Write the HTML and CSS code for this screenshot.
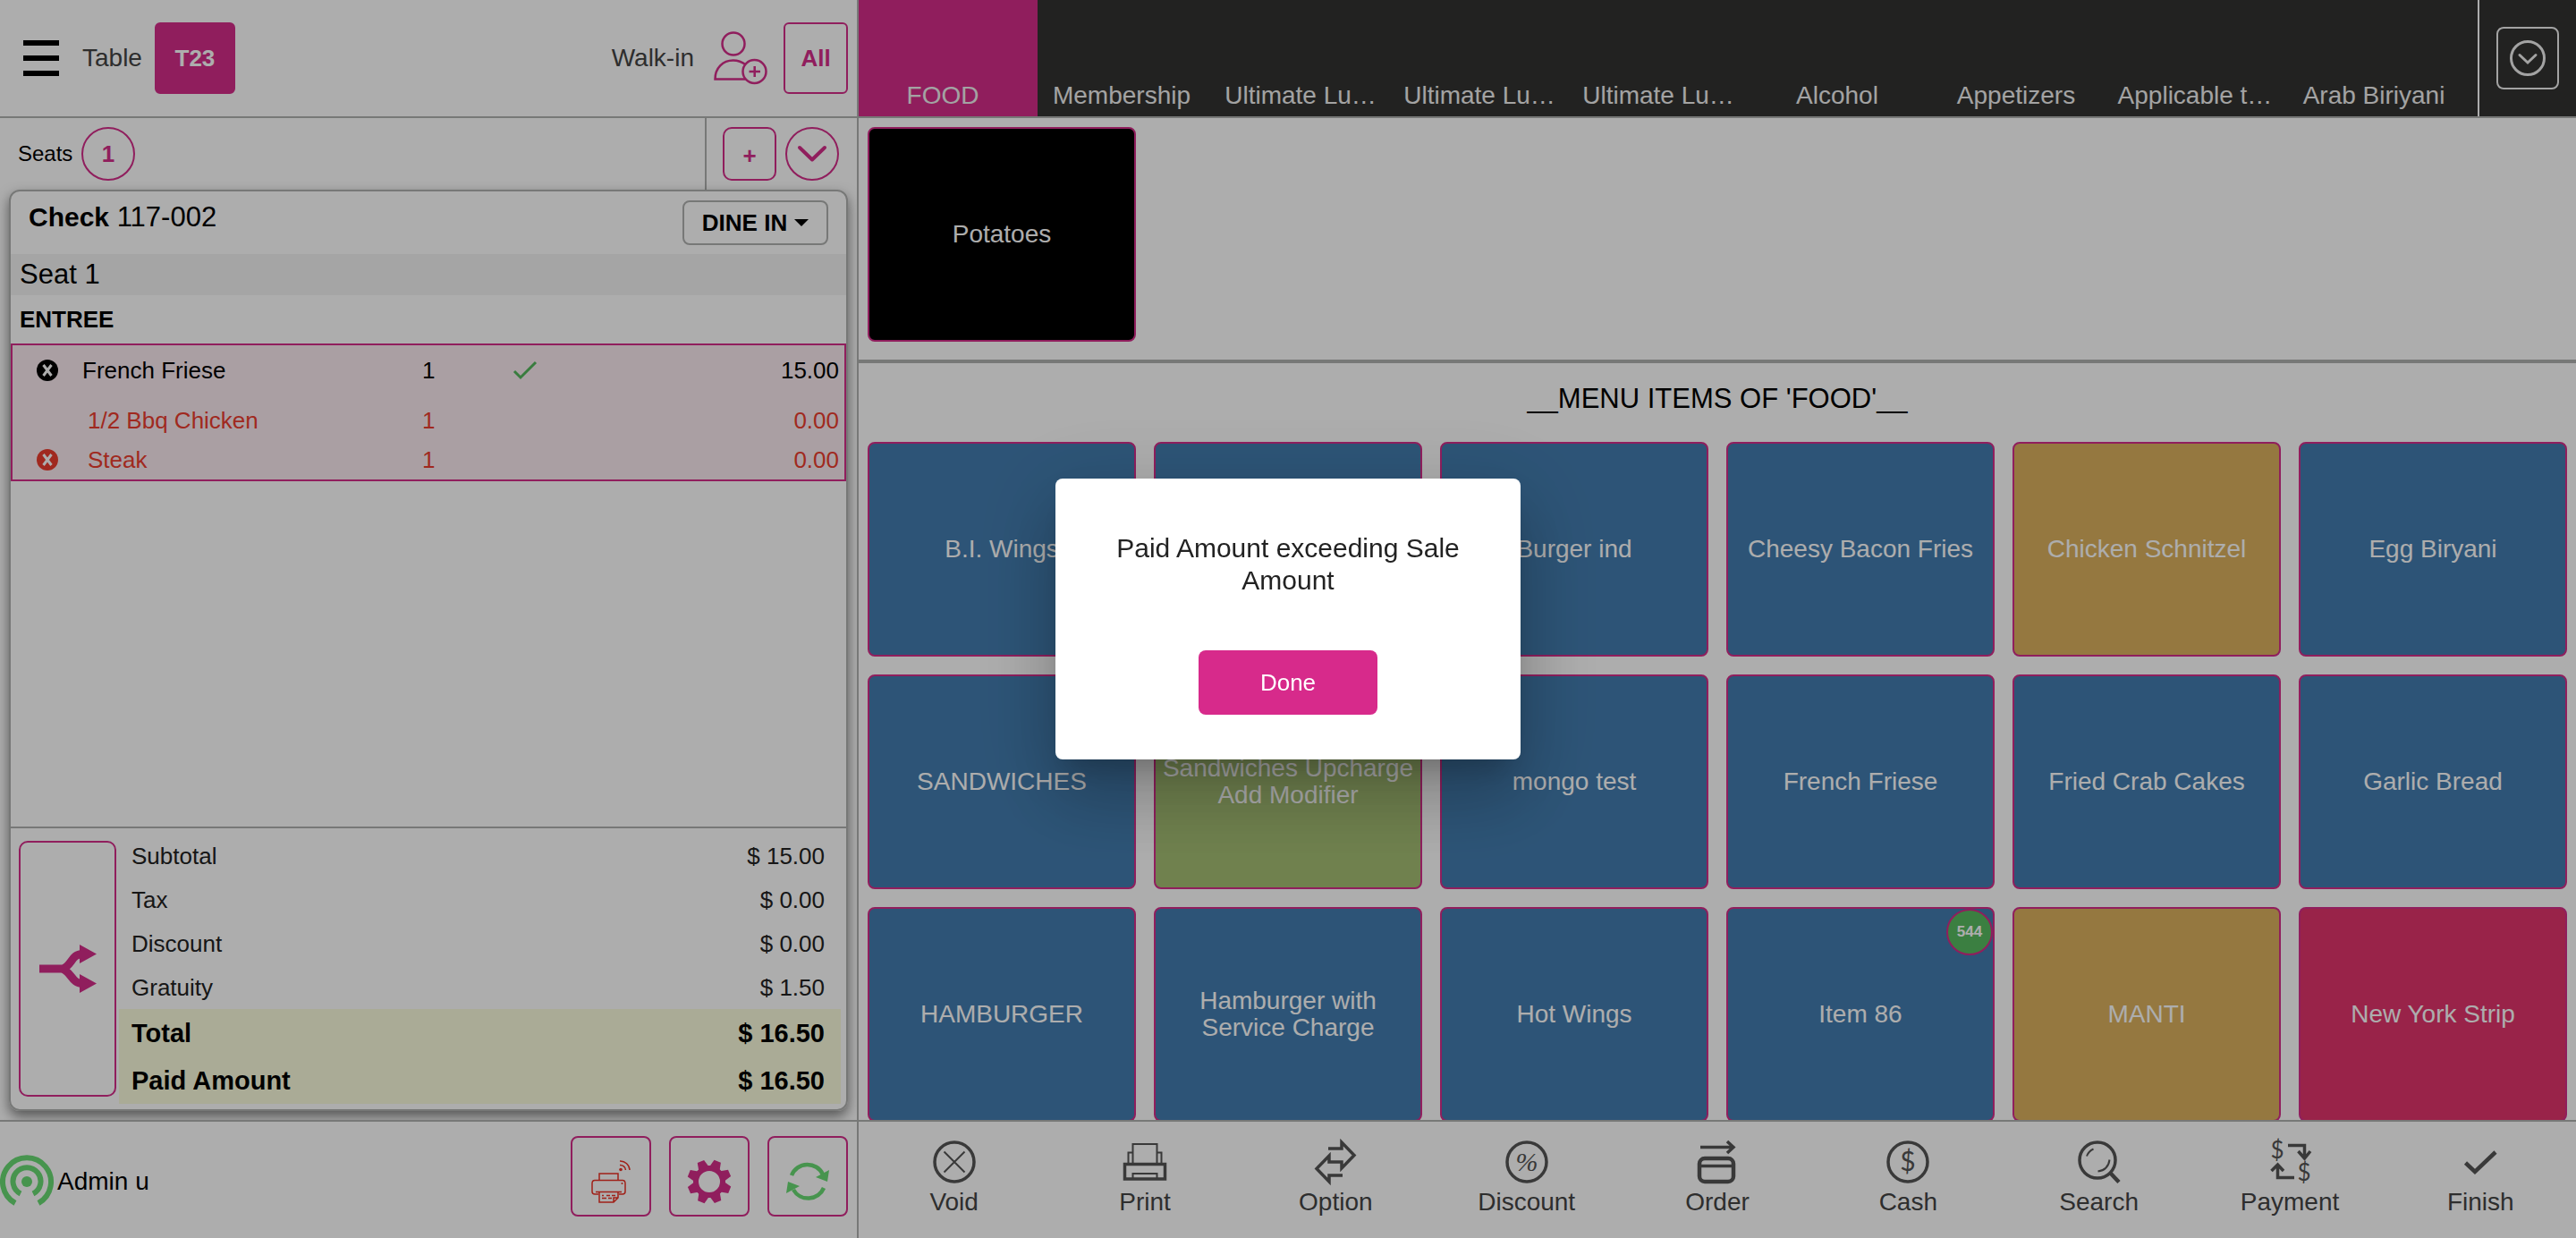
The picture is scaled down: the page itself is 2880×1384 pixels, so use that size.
FILE: index.html
```html
<!DOCTYPE html>
<html lang="en">
<head>
<meta charset="utf-8">
<title>Point of Sale</title>
<link rel="stylesheet" href="styles.css">
</head>
<body>
<div class="app">
  <section class="check-pane">
    <header class="topbar">
      <button class="menu-toggle" aria-label="Menu"><span></span><span></span><span></span></button>
      <span class="topbar-label">Table</span>
      <button class="table-button">T23</button>
      <span class="topbar-label customer">Walk-in</span>
      <button class="add-customer" aria-label="Add customer">
        <svg width="60" height="60" viewBox="0 0 60 60" fill="none" stroke="currentColor" stroke-width="2.5">
          <circle cx="22" cy="14" r="12.5"/>
          <path d="M35 53.5H1.5C1.5 41 10 32.5 21.7 32.5C27 32.5 32 34.5 36 37.500"/>
          <circle cx="45.500" cy="45" r="13"/>
          <path d="M39.500 45H52M45.700 39V51"/>
        </svg>
      </button>
      <button class="all-button">All</button>
    </header>

    <div class="seats">
      <span class="seats-label">Seats</span>
      <button class="seat-chip">1</button>
      <div class="seats-actions">
        <button class="seat-add">+</button>
        <button class="seat-chip" aria-label="Show seats">
          <svg width="32" height="18" viewBox="0 0 32 18" fill="none" stroke="currentColor" stroke-width="4" stroke-linecap="round" stroke-linejoin="round"><path d="M2 2L16 15.500L30 2"/></svg>
        </button>
      </div>
    </div>

    <article class="ticket">
      <div class="ticket-head">
        <h1 class="ticket-title"><b>Check</b> 117-002</h1>
        <button class="order-type">DINE IN
          <svg width="16" height="8" viewBox="0 0 16 8"><path d="M0 0H16L8 8Z"/></svg>
        </button>
      </div>
      <h2 class="seat-name">Seat 1</h2>
      <h3 class="course">ENTREE</h3>
      <table class="lines">
        <tr>
          <td class="mark"><svg width="24" height="24" viewBox="0 0 24 24"><circle cx="12" cy="12" r="12"/><path class="cross" d="M7.500 6L16.500 18M16.500 6L7.500 18"/></svg></td>
          <td>French Friese</td><td>1</td>
          <td><svg class="sent" width="28" height="22" viewBox="0 0 28 22"><path d="M2 12L9 19L26 2"/></svg></td>
          <td class="price">15.00</td>
        </tr>
        <tr class="modifier">
          <td></td><td>1/2 Bbq Chicken</td><td>1</td><td></td><td class="price">0.00</td>
        </tr>
        <tr class="modifier last">
          <td class="mark"><svg width="24" height="24" viewBox="0 0 24 24"><circle cx="12" cy="12" r="12"/><path class="cross" d="M7.500 6L16.500 18M16.500 6L7.500 18"/></svg></td>
          <td>Steak</td><td>1</td><td></td><td class="price">0.00</td>
        </tr>
      </table>
      <div class="summary">
        <button class="split-button" aria-label="Split check">
          <svg width="64" height="54" viewBox="0 0 64 54" fill="none" stroke="currentColor" stroke-width="9">
            <path d="M0 27H26C36 24 36 10.500 48 10.500M25 27C36 30 36 43.500 48 43.500"/>
            <path d="M45 0L64 10.500L45 21ZM45 33L64 43.500L45 54Z" fill="currentColor" stroke="none"/>
          </svg>
        </button>
        <table class="totals">
          <tr><th>Subtotal</th><td>$ 15.00</td></tr>
          <tr><th>Tax</th><td>$ 0.00</td></tr>
          <tr><th>Discount</th><td>$ 0.00</td></tr>
          <tr><th>Gratuity</th><td>$ 1.50</td></tr>
          <tr class="grand"><th>Total</th><td>$ 16.50</td></tr>
          <tr class="grand"><th>Paid Amount</th><td>$ 16.50</td></tr>
        </table>
      </div>
    </article>

    <footer class="user-bar">
      <div class="user">
        <svg width="60" height="60" viewBox="0 0 60 60" fill="none" stroke="currentColor" stroke-width="6">
          <circle cx="30" cy="30" r="6" fill="currentColor" stroke="none"/>
          <path d="M23 43.500A15.500 15.500 0 1 1 37 43.500M17 54A27 27 0 1 1 43 54"/>
        </svg>
        <span>Admin u</span>
      </div>
      <button class="tool printer" aria-label="Printer status">
        <svg width="44" height="48" viewBox="0 0 44 48" fill="none" stroke="currentColor" stroke-width="1.500">
          <path d="M9 22.500V15H30V22.500M8 38H4Q1 38 1 35V26Q1 22.500 4 22.500H35Q38 22.500 38 26V35Q38 38 35 38H31M5 35.500H34M9 35.500V47H25L30 42V35.500M25 47V42H30M12 39.500H14M17 39.500H21M23 39.500H27M12 42.500H17M19 42.500H23M32 5.500A6 6 0 0 1 38.500 11M32 1A10.500 10.500 0 0 1 43 11"/>
          <circle cx="33" cy="10.500" r="1.800" fill="currentColor" stroke="none"/><circle cx="34.500" cy="26" r="1" fill="currentColor" stroke="none"/>
        </svg>
      </button>
      <button class="tool" aria-label="Settings">
        <svg width="48" height="48" viewBox="-24 -24 48 48" fill="currentColor">
          <defs><path id="tooth" d="M-6 -16L-4 -24.500H4L6 -16Z"/></defs>
          <circle r="15" fill="none" stroke="currentColor" stroke-width="6"/>
          <use href="#tooth" transform="rotate(22)"/><use href="#tooth" transform="rotate(67)"/><use href="#tooth" transform="rotate(112)"/><use href="#tooth" transform="rotate(157)"/><use href="#tooth" transform="rotate(202)"/><use href="#tooth" transform="rotate(247)"/><use href="#tooth" transform="rotate(292)"/><use href="#tooth" transform="rotate(337)"/>
        </svg>
      </button>
      <button class="tool sync" aria-label="Sync">
        <svg width="48" height="44" viewBox="0 0 48 44" fill="none" stroke="currentColor" stroke-width="4.500">
          <path d="M6 15A19 19 0 0 1 41 14M42 29A19 19 0 0 1 8 31"/>
          <path d="M48 9L46 22L33 17ZM0 35L2 22L15 27Z" fill="currentColor" stroke="none"/>
        </svg>
      </button>
    </footer>
  </section>

  <section class="menu-pane">
    <nav class="categories">
      <button class="category active">FOOD</button>
      <button class="category">Membership</button>
      <button class="category">Ultimate Lu…</button>
      <button class="category">Ultimate Lu…</button>
      <button class="category">Ultimate Lu…</button>
      <button class="category">Alcohol</button>
      <button class="category">Appetizers</button>
      <button class="category">Applicable t…</button>
      <button class="category">Arab Biriyani</button>
      <div class="more">
        <button class="more-button" aria-label="More categories">
          <svg width="40" height="40" viewBox="0 0 40 40" fill="none" stroke="currentColor" stroke-width="3" stroke-linecap="round"><circle cx="20" cy="20" r="18.500"/><path d="M11 16.500L20 25L29 16.500"/></svg>
        </button>
      </div>
    </nav>

    <div class="subcategories">
      <button class="tile black">Potatoes</button>
    </div>

    <div class="items">
      <h2 class="items-title">__MENU ITEMS OF 'FOOD'__</h2>
      <div class="item-grid">
        <button class="tile">B.I. Wings</button>
        <button class="tile"></button>
        <button class="tile">Burger ind</button>
        <button class="tile">Cheesy Bacon Fries</button>
        <button class="tile gold">Chicken Schnitzel</button>
        <button class="tile">Egg Biryani</button>
        <button class="tile">SANDWICHES</button>
        <button class="tile green">Sandwiches Upcharge Add Modifier</button>
        <button class="tile">mongo test</button>
        <button class="tile">French Friese</button>
        <button class="tile">Fried Crab Cakes</button>
        <button class="tile">Garlic Bread</button>
        <button class="tile">HAMBURGER</button>
        <button class="tile">Hamburger with Service Charge</button>
        <button class="tile">Hot Wings</button>
        <button class="tile">Item 86<span class="count">544</span></button>
        <button class="tile gold">MANTI</button>
        <button class="tile crimson">New York Strip</button>
      </div>
    </div>

    <footer class="actions">
      <button class="action"><svg viewBox="0 0 48 48"><circle cx="24" cy="24" r="22"/><path class="thin" d="M12.500 12.500L35.500 35.500M35.500 12.500L12.500 35.500"/></svg>Void</button>
      <button class="action"><svg viewBox="0 0 48 48"><path class="thin" d="M10.500 25V4H37.500V25M10.500 13.500H5.500V25M37.500 13.500H42.500V25M10.500 42V37H37.500V42"/><path d="M1.500 26.500H46.500V43H1.500Z"/></svg>Print</button>
      <button class="action"><svg viewBox="0 0 48 48"><path d="M16 9H31V2L45 16.500L31 31V24H17V17L3 31.500L17 46V39H32"/></svg>Option</button>
      <button class="action"><svg viewBox="0 0 48 48"><circle cx="24" cy="24" r="22"/><text class="percent" x="24" y="34">%</text></svg>Discount</button>
      <button class="action"><svg viewBox="0 0 48 48"><path d="M5 7.500H42M35 1L42 7.500L35 14"/><rect class="thick" x="4" y="20" width="38" height="26" rx="6"/><path d="M4 28.500H42"/></svg>Order</button>
      <button class="action"><svg viewBox="0 0 48 48"><circle cx="24" cy="24" r="22"/><text class="dollar" x="24" y="34">$</text></svg>Cash</button>
      <button class="action"><svg viewBox="0 0 48 48"><circle cx="22" cy="22" r="20"/><path class="thin" d="M10 17.500Q12 12 17.500 9.500M35.500 21.500Q34 33 22.500 34.500"/><path class="thick" d="M37 37L46 46.500"/></svg>Search</button>
      <button class="action"><svg viewBox="0 0 48 48"><text class="dollar small" x="10" y="20">$</text><text class="dollar small" x="40" y="45">$</text><path d="M22 5.500H40.500V18M33.500 12L40.500 20L47 12M29 41.500H10.500V29M3.500 34L10.500 27L17 34"/></svg>Payment</button>
      <button class="action"><svg viewBox="0 0 48 48"><path class="thick" d="M7.500 25L18 35L41 13"/></svg>Finish</button>
    </footer>
  </section>
</div>

<div class="overlay">
  <div class="modal" role="alertdialog" aria-labelledby="modal-message">
    <p class="modal-message" id="modal-message">Paid Amount exceeding Sale Amount</p>
    <button class="modal-button">Done</button>
  </div>
</div>
</body>
</html>
```
FILE: styles.css
```css
:root {
  --pink: #d42d8a;
  --line: #b0b1b0;
}

* { box-sizing: border-box; }

body {
  margin: 0;
  background: #fff;
  color: #000;
  font-family: "Liberation Sans", Arial, sans-serif;
  font-size: 26px;
  line-height: 30px;
}

button {
  display: flex;
  align-items: center;
  justify-content: center;
  flex: none;
  margin: 0;
  padding: 0;
  border: 0;
  background: none;
  color: inherit;
  font: inherit;
}

svg { display: block; flex: none; overflow: visible; }

h1, h2, h3, p { margin: 0; font-weight: 400; }

.app {
  display: grid;
  grid-template-columns: minmax(0, 1fr) minmax(0, 2fr);
  height: 100vh;
}

/* Left pane: current check */
.check-pane {
  display: flex;
  flex-direction: column;
  min-height: 0;
  overflow: hidden;
  border-right: 2px solid var(--line);
}

.topbar {
  display: flex;
  align-items: center;
  flex: none;
  height: 132px;
  padding: 0 10px 0 26px;
  border-bottom: 2px solid var(--line);
}

.menu-toggle {
  flex-direction: column;
  justify-content: space-between;
  width: 40px;
  height: 40px;
  margin-right: 26px;
}
.menu-toggle span { width: 40px; height: 6px; background: #000; }

.topbar-label { color: #444; font-size: 28px; }

.table-button, .all-button {
  height: 80px;
  border: 2px solid var(--pink);
  border-radius: 6px;
  font-weight: 700;
}
.table-button { width: 90px; margin-left: 14px; background: var(--pink); color: #fff; }
.all-button { width: 72px; color: var(--pink); }
.customer { margin-left: auto; }
.add-customer { margin: 0 18px 0 22px; color: var(--pink); }

.seats {
  display: flex;
  align-items: center;
  flex: none;
  height: 80px;
  padding-left: 20px;
}
.seats-label { width: 71px; font-size: 24px; }
.seat-chip, .seat-add {
  width: 60px;
  height: 60px;
  border: 2px solid var(--pink);
  color: var(--pink);
  font-weight: 700;
}
.seat-chip { border-radius: 50%; }
.seat-add { border-radius: 10px; padding-top: 4px; }
.seats-actions {
  display: flex;
  align-items: center;
  gap: 10px;
  height: 80px;
  margin-left: auto;
  padding: 0 20px 0 18px;
  border-left: 2px solid var(--line);
}

.ticket {
  display: flex;
  flex-direction: column;
  flex: 1;
  min-height: 0;
  margin: 0 10px;
  margin-bottom: 10px;
  overflow: hidden;
  border: 2px solid var(--line);
  border-radius: 12px;
  box-shadow: 0 6px 14px rgba(0, 0, 0, .5);
}
.ticket-head {
  display: flex;
  align-items: flex-start;
  justify-content: space-between;
  height: 70px;
  padding: 10px 20px 0;
}
.ticket-title { padding-top: 4px; font-size: 31px; }
.ticket-title b { font-size: 30px; }
.order-type {
  gap: 8px;
  width: 163px;
  height: 50px;
  border: 2px solid var(--line);
  border-radius: 8px;
  font-weight: 700;
}
.seat-name { padding: 8px 10px; background: #f3f3f3; font-size: 31px; }
.course { padding: 12px 10px; font-size: 26px; font-weight: 700; }

.lines {
  display: block;
  flex: none;
  padding-bottom: 6px;
  border: 2px solid var(--pink);
  border-spacing: 0;
  background: #fbebf1;
}
.lines tbody { display: table; width: 100%; table-layout: fixed; }
.lines tr { height: 56px; }
.lines td { padding: 0; }
.lines td:nth-child(1) { width: 78px; }
.lines td:nth-child(2) { width: 380px; }
.lines td:nth-child(3) { width: 101px; }
.lines td:nth-child(4) { width: 100px; }
.lines .mark { padding-left: 27px; }
.lines .price { padding-right: 6px; text-align: right; }
.lines .modifier { color: #ec3d2f; }
.lines .modifier td:nth-child(2) { padding-left: 6px; }
.lines .last { height: 32px; }
.mark svg { fill: currentColor; }
.cross { stroke: #fff; stroke-width: 3; }
.sent path { fill: none; stroke: #54b75c; stroke-width: 3; }

.summary {
  display: flex;
  flex: none;
  gap: 3px;
  margin-top: auto;
  padding: 6px 6px 6px 9px;
  border-top: 2px solid var(--line);
}
.split-button {
  width: 109px;
  margin: 8px 0;
  border: 2px solid var(--pink);
  border-radius: 10px;
  color: var(--pink);
}
.totals { flex: 1; border-spacing: 0; }
.totals tr { height: 49px; }
.totals th { padding: 0 0 0 14px; color: #222; font-weight: 400; text-align: left; }
.totals td { padding: 0 18px 0 0; color: #222; text-align: right; }
.totals .grand { height: 53px; background: #fbfddd; font-size: 29px; }
.totals .grand th, .totals .grand td { color: #000; font-weight: 700; }

.user-bar {
  display: flex;
  align-items: flex-start;
  flex: none;
  gap: 20px;
  height: 132px;
  padding: 16px 10px 0 0;
  border-top: 2px solid var(--line);
  background: #fff;
}
.user {
  display: flex;
  align-items: center;
  gap: 4px;
  margin-right: auto;
  padding-top: 21px;
  font-size: 28px;
}
.user svg { color: #69da74; }
.tool {
  width: 90px;
  height: 90px;
  padding-top: 12px;
  border: 2px solid var(--pink);
  border-radius: 8px;
  color: var(--pink);
}
.tool.printer svg { color: #ec3225; }
.tool.sync svg { color: #69da74; }

/* Right pane: menu */
.menu-pane {
  display: flex;
  flex-direction: column;
  min-height: 0;
}

.categories {
  display: flex;
  flex: none;
  height: 132px;
  border-bottom: 2px solid var(--line);
  background: #333331;
}
.category {
  flex: 0 0 200px;
  align-items: flex-end;
  padding: 0 12px 8px 0;
  color: #f0f0f0;
  font-size: 28px;
}
.category.active { background: var(--pink); }
.more {
  display: flex;
  align-items: center;
  justify-content: center;
  width: 110px;
  margin-left: auto;
  border-left: 2px solid #fff;
}
.more-button {
  width: 70px;
  height: 70px;
  border: 2px solid #f0f0f0;
  border-radius: 8px;
  color: #f0f0f0;
}

.subcategories, .item-grid {
  display: grid;
  grid-template-columns: repeat(6, minmax(0, 1fr));
  gap: 20px;
  padding: 0 10px;
}
.subcategories {
  flex: none;
  height: 274px;
  padding-top: 10px;
  border-bottom: 4px solid var(--line);
}
.tile {
  position: relative;
  height: 240px;
  border: 2px solid var(--pink);
  border-radius: 8px;
  background: #437db0;
  color: #fff;
  font-size: 28px;
}
.tile.black { background: #000; }
.tile.gold { background: #dcb25f; }
.tile.green { background: #a5bf74; }
.tile.crimson { background: #e2346c; }
.count {
  position: absolute;
  top: 0;
  right: 0;
  width: 52px;
  height: 52px;
  border: 2px solid var(--pink);
  border-radius: 50%;
  background: #58bc61;
  font-size: 17px;
  font-weight: 700;
  line-height: 48px;
}

.items { flex: 1; min-height: 0; overflow: hidden; }
.items-title {
  padding: 20px 0 28px;
  font-size: 31px;
  line-height: 40px;
  text-align: center;
}

.actions {
  display: grid;
  grid-template-columns: repeat(9, minmax(0, 1fr));
  flex: none;
  height: 132px;
  border-top: 2px solid var(--line);
  color: #444;
}
.action {
  flex-direction: column;
  justify-content: flex-start;
  gap: 6px;
  padding-top: 21px;
  font-size: 28px;
}
.action svg { width: 48px; height: 48px; fill: none; stroke: #555; stroke-width: 3.5; }
.action .thin { stroke-width: 2; }
.action .thick { stroke-width: 4.5; }
.action text { fill: #555; stroke: none; text-anchor: middle; }
.percent { font: italic 30px "Liberation Serif", serif; }
.dollar { font: 400 30px Lato, sans-serif; }
.dollar.small { font-size: 26px; }

/* Alert dialog */
.overlay {
  position: fixed;
  inset: 0;
  display: flex;
  align-items: center;
  justify-content: center;
  background: rgba(0, 0, 0, .32);
}
.modal {
  display: flex;
  flex-direction: column;
  align-items: center;
  gap: 60px;
  width: 520px;
  padding: 60px 60px 50px;
  border-radius: 8px;
  background: #fff;
  box-shadow: 0 22px 30px -14px rgba(0, 0, 0, .2), 0 48px 76px 6px rgba(0, 0, 0, .14), 0 18px 92px 16px rgba(0, 0, 0, .12);
}
.modal-message {
  color: #222;
  font-size: 30px;
  line-height: 36px;
  text-align: center;
}
.modal-button {
  width: 200px;
  height: 72px;
  border-radius: 8px;
  background: #d72a8b;
  color: #fff;
}
```
